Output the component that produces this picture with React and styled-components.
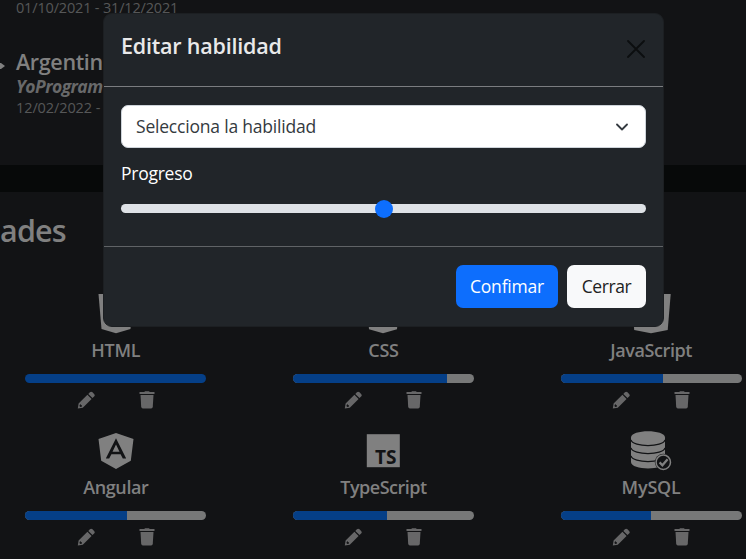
import React from 'react';
import styled, { createGlobalStyle } from 'styled-components';

const GlobalStyle = createGlobalStyle`
  * { box-sizing: border-box; }
  body { margin: 0; overflow: hidden; background: #070909; }
`;

const Page = styled.div`
  position: relative;
  width: 746px;
  height: 559px;
  overflow: hidden;
  font-family: 'Open Sans', 'Noto Sans', sans-serif;
  color: #808080;
`;

const Education = styled.section`
  height: 165px;
  padding-left: 16px;
  background: #121315;
`;

const Text = styled.div`
  width: max-content;
  white-space: nowrap;
  font-size: ${(p) => p.$size}px;
  line-height: ${(p) => p.$line}px;
  font-weight: ${(p) => p.$weight || 400};
  font-style: ${(p) => (p.$italic ? 'italic' : 'normal')};
  letter-spacing: ${(p) => p.$track || 0}px;
`;

const DateText = styled(Text)`
  color: #565758;
`;

const Degree = styled.div`
  display: flex;
  align-items: center;
  height: 30px;
  margin: 31px 0 0 -20px;
  gap: 11px;
`;

const School = styled(Text)`
  margin-top: -1px;
  color: #68696a;
`;

const Marker = styled.svg`
  display: block;
  width: 9px;
  height: 8px;
  margin-top: 8px;
`;

const Skills = styled.section`
  height: 367px;
  margin-top: 27px;
  padding-top: 18px;
  background: #121315;
`;

const SkillGrid = styled.div`
  display: grid;
  grid-template-columns: repeat(3, 267.67px);
  grid-auto-rows: 137px;
  margin: 41px 0 0 -18px;
`;

const Skill = styled.article`
  display: flex;
  flex-direction: column;
  align-items: center;
`;

const Logo = styled.svg`
  display: block;
  width: 46px;
  height: 45px;
  fill: #808080;
`;

const SkillName = styled(Text)`
  margin-top: 1px;
`;

const Track = styled.div`
  width: 181px;
  height: 9px;
  margin-top: 10px;
  border-radius: 5px;
  overflow: hidden;
  background: #777878;
`;

const Fill = styled.div`
  height: 100%;
  background: #053f87;
`;

const Actions = styled.div`
  display: flex;
  justify-content: center;
  gap: 43px;
  margin-top: 8px;
  padding-left: 1px;
`;

const ActionIcon = styled.svg`
  display: block;
  width: 18px;
  height: 18px;
  fill: #676768;
`;

const Modal = styled.div`
  position: absolute;
  left: 103px;
  top: 13px;
  width: 561px;
  height: 314px;
  border: 1px solid #1c1f22;
  border-radius: 9px;
  background: #212529;
  color: #fff;
`;

const Header = styled.header`
  display: flex;
  justify-content: space-between;
  height: 73px;
  padding: 17px 17px 0;
  border-bottom: 1px solid #7b7d80;
`;

const Title = styled(Text)`
  color: #e9e9ea;
`;

const Close = styled.svg`
  width: 18px;
  height: 18px;
  margin: 9px 1px 0 0;
  stroke: #0c0e0f;
  stroke-width: 1.8;
  stroke-linecap: round;
`;

const Body = styled.div`
  height: 160px;
  padding: 18px 17px 0;
  border-bottom: 1px solid #606366;
`;

const Select = styled.div`
  display: flex;
  align-items: center;
  justify-content: space-between;
  height: 43px;
  padding: 0 17px 0 14px;
  border: 1px solid #ced4da;
  border-radius: 7px;
  background: #fff;
  color: #343a40;
`;

const Chevron = styled.svg`
  width: 12px;
  height: 8px;
  fill: none;
  stroke: #343a40;
  stroke-width: 1.8;
  stroke-linecap: round;
  stroke-linejoin: round;
`;

const Label = styled(Text)`
  margin-top: 12px;
`;

const Range = styled.div`
  display: flex;
  align-items: center;
  justify-content: center;
  height: 9px;
  margin-top: 17px;
  border-radius: 5px;
  background: #dee2e6;
`;

const Thumb = styled.div`
  flex: none;
  width: 18px;
  height: 18px;
  border-radius: 50%;
  background: #0d6efd;
`;

const Footer = styled.footer`
  display: flex;
  justify-content: flex-end;
  gap: 9px;
  padding: 18px 17px 0;
`;

const Button = styled.button`
  display: flex;
  align-items: center;
  justify-content: center;
  width: ${(p) => p.$width}px;
  height: 43px;
  padding: 0;
  border: 0;
  border-radius: 7px;
  font-family: inherit;
  background: ${(p) => (p.$primary ? '#0d6efd' : '#f8f9fa')};
  color: ${(p) => (p.$primary ? '#fff' : '#222')};
`;

const logos = {
  html: <polygon points="5.5,3 40.5,3 37.5,38 23,42.3 8.5,38" />,
  css: <polygon points="6,3 40,3 37,38.3 23,42.3 9,38.3" />,
  js: <polygon points="3.2,3 42.7,3 39.7,39 23,42.3 6.2,39" />,
  angular: (
    <path
      fillRule="evenodd"
      d="M23 5 40.5 11 37.8 32.7 23 41 8.2 32.7 5.5 11ZM23 10.2 12.8 30.5H16.2L18.4 26.2H27.6L29.8 30.5H33.2ZM23 16.4 26.5 23.7H19.5Z"
    />
  ),
  ts: (
    <>
      <rect x="6.8" y="6.2" width="33" height="33" />
      <text x="15" y="36" fontSize="20" fontWeight="700" fill="#121315" textLength="21.5" lengthAdjust="spacingAndGlyphs">TS</text>
    </>
  ),
  mysql: (
    <>
      <path d="M3 9.5C3 1.2 37 1.2 37 9.5V34C37 42.5 3 42.5 3 34Z" />
      <path d="M3 11.8C5 19.5 35 19.5 37 11.8M3 19.8C5 27.5 35 27.5 37 19.8M3 27.8C5 35.5 35 35.5 37 27.8" fill="none" stroke="#121315" strokeWidth="1.3" />
      <circle cx="35.3" cy="34.2" r="8.4" fill="#121315" />
      <circle cx="35.3" cy="34.2" r="7.2" fill="#121315" stroke="#808080" strokeWidth="1.5" />
      <path d="M31.6 34.4 34.4 37.2 39.6 31.3" fill="none" stroke="#808080" strokeWidth="2.3" />
    </>
  ),
};

const skills = [
  { name: 'HTML', logo: 'html', value: 100, track: -0.2 },
  { name: 'CSS', logo: 'css', value: 85, track: -0.2 },
  { name: 'JavaScript', logo: 'js', value: 56.5, track: -0.4 },
  { name: 'Angular', logo: 'angular', value: 56, track: -0.4 },
  { name: 'TypeScript', logo: 'ts', value: 52, track: -0.5 },
  { name: 'MySQL', logo: 'mysql', value: 50, track: -0.2 },
];

const PencilIcon = () => (
  <ActionIcon viewBox="0 0 18 18">
    <path d="M12.9 1.3Q14.2 0 15.5 1.3L17.1 2.9Q18.4 4.2 17.1 5.5L15.5 7.1 11.3 2.9Z" />
    <path fillRule="evenodd" d="M10.4 3.8 14.6 8 5.8 16.8 0.8 17.6 1.6 12.6ZM3 13.4 2.4 15.1 3.3 16 5 15.4V14.2H3.9V13.2Z" />
  </ActionIcon>
);

const TrashIcon = () => (
  <ActionIcon viewBox="0 0 18 18">
    <path d="M6.3 1 7 .2H11L11.7 1H16.5V3H1.5V1Z" />
    <path d="M2.5 4H15.5L14.8 15.8Q14.7 17.4 13.1 17.4H4.9Q3.3 17.4 3.2 15.8Z" />
  </ActionIcon>
);

export default function App() {
  return (
    <Page>
      <GlobalStyle />
      <Education>
        <DateText $size={14.5} $line={16} $track={-0.17}>01/10/2021 - 31/12/2021</DateText>
        <Degree>
          <Marker viewBox="0 0 9 8"><path d="M0 1H5L9 4 5 7H0Z" fill="#808080" /></Marker>
          <Text $size={21.5} $line={30} $weight={600} $track={-0.35}>Argentin</Text>
        </Degree>
        <School $size={17.5} $line={20} $weight={700} $italic $track={-0.55}>YoProgram</School>
        <DateText $size={14.5} $line={23} $track={-0.1}>12/02/2022 -</DateText>
      </Education>
      <Skills>
        <Text $size={30.5} $line={40} $weight={600} $track={-0.8}>ades</Text>
        <SkillGrid>
          {skills.map((s) => (
            <Skill key={s.name}>
              <Logo viewBox="0 0 46 45">{logos[s.logo]}</Logo>
              <SkillName $size={18} $line={27} $weight={600} $track={s.track}>{s.name}</SkillName>
              <Track><Fill style={{ width: `${s.value}%` }} /></Track>
              <Actions><PencilIcon /><TrashIcon /></Actions>
            </Skill>
          ))}
        </SkillGrid>
      </Skills>
      <Modal role="dialog">
        <Header>
          <Title $size={21.5} $line={30} $weight={600} $track={-0.2}>Editar habilidad</Title>
          <Close viewBox="0 0 18 18"><path d="M1 1 17 17M17 1 1 17" /></Close>
        </Header>
        <Body>
          <Select>
            <Text $size={17.5} $line={27} $track={-0.2}>Selecciona la habilidad</Text>
            <Chevron viewBox="0 0 12 8"><path d="M1 1.5 6 6.5 11 1.5" /></Chevron>
          </Select>
          <Label $size={17.5} $line={27} $track={-0.25}>Progreso</Label>
          <Range><Thumb /></Range>
        </Body>
        <Footer>
          <Button $primary $width={102}><Text $size={17.5} $line={27} $track={-0.2}>Confimar</Text></Button>
          <Button $width={79}><Text $size={17.5} $line={27} $track={-0.4}>Cerrar</Text></Button>
        </Footer>
      </Modal>
    </Page>
  );
}
